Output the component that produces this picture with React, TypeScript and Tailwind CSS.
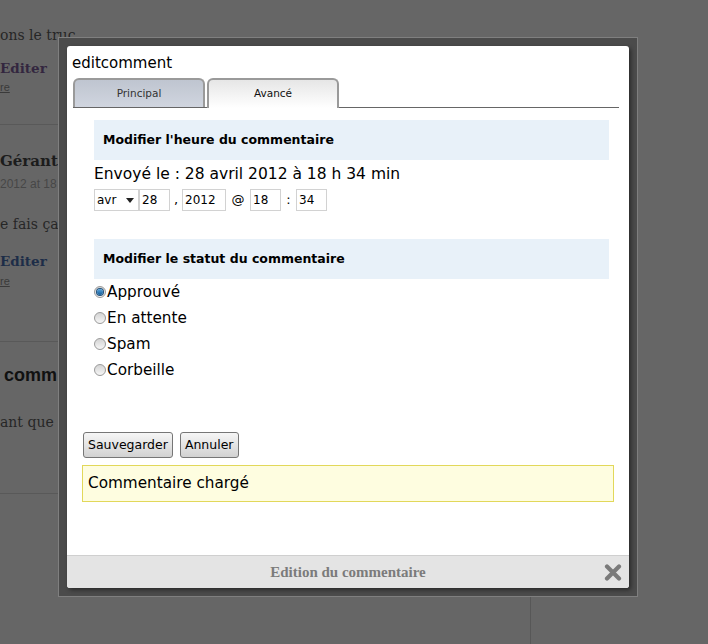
import React from "react";

const sans = "font-['DejaVu_Sans',sans-serif]";

function Radio({ label, checked }: { label: string; checked?: boolean }) {
  return (
    <label className="flex h-[26px] items-center">
      <span className="flex h-[12px] w-[12px] items-center justify-center rounded-full border border-[#9a9a9a] bg-gradient-to-b from-[#d4d4d4] to-[#f6f6f6]">
        {checked && (
          <span className="h-[6px] w-[6px] rounded-full bg-gradient-to-b from-[#5aa8e0] to-[#0f5a96] shadow-[0_0_0_1px_#1f4f7a]" />
        )}
      </span>
      <span className="ml-px text-[15.25px] leading-[20px] text-black">{label}</span>
    </label>
  );
}

function Field({ value, w }: { value: string; w: string }) {
  return (
    <input
      readOnly
      value={value}
      className={`h-[22px] ${w} border border-[#d2d2d2] bg-white px-[2px] text-[12px] text-black outline-none`}
    />
  );
}

function SectionTitle({ children }: { children: React.ReactNode }) {
  return (
    <div className="flex h-[40px] items-center bg-[#e8f1f9] pl-[9px] text-[12.5px] font-bold text-black">
      {children}
    </div>
  );
}

function BackgroundPage() {
  return (
    <div className="flex h-full">
      <div className="flex w-[530px] flex-col font-['DejaVu_Serif',serif]">
        <div className="flex h-[125px] flex-col border-b border-[#595959] pt-[26px]">
          <div className="h-[18px] text-[14px] leading-[18px] text-[#262626]">ons le truc</div>
          <div className="mt-[15px] flex h-[18px] items-center">
            <span className="text-[13.5px] font-bold text-[#33263f]">Editer</span>
            <span className="ml-[19px] text-[9px] text-[#2a2a2a]">▾</span>
          </div>
          <div className="mt-[3px] h-[14px] font-['Liberation_Sans',sans-serif] text-[11px] leading-[14px] text-[#3a3a3a] underline">re</div>
        </div>
        <div className="flex h-[217px] flex-col border-b border-[#595959] pt-[26px]">
          <div className="h-[20px] text-[15px] font-bold leading-[20px] text-[#1c1c1c]">Gérant</div>
          <div className="mt-[6px] h-[14px] font-['Liberation_Sans',sans-serif] text-[12px] leading-[14px] text-[#474747]">2012 at 18</div>
          <div className="mt-[24px] h-[18px] text-[14px] leading-[18px] text-[#262626]">e fais ça i</div>
          <div className="mt-[19px] flex h-[18px] items-center">
            <span className="text-[13.5px] font-bold text-[#1d2d48]">Editer</span>
            <span className="ml-[19px] text-[9px] text-[#2a2a2a]">▾</span>
          </div>
          <div className="mt-[4px] h-[14px] font-['Liberation_Sans',sans-serif] text-[11px] leading-[14px] text-[#3a3a3a] underline">re</div>
        </div>
        <div className="flex h-[152px] flex-col border-b border-[#595959] pt-[21px]">
          <div className="h-[24px] pl-[4px] font-['Liberation_Sans',sans-serif] text-[18px] font-bold leading-[24px] text-[#111]">comm</div>
          <div className="mt-[26px] h-[18px] text-[14px] leading-[18px] text-[#262626]">
            ant que <span className="text-[#2f2140] underline">M</span>
          </div>
        </div>
      </div>
      <div className="mt-[590px] flex-1 border-l border-[#575757]" />
    </div>
  );
}

export default function App() {
  return (
    <div className="relative h-[644px] w-[708px] overflow-hidden bg-[#666666]">
      <BackgroundPage />

      <div className="absolute left-[58px] top-[37px] h-[560px] w-[580px] border border-[#7f7f7f] bg-[#4b4b4b] p-2">
        <div className={`flex h-full flex-col rounded-[3px] bg-white shadow-[2px_2px_4px_rgba(0,0,0,0.45)] ${sans}`}>
          <div className="pl-[5px] pt-[7px] text-[15px] leading-[20px] text-black">editcomment</div>

          <div className="ml-[6px] mr-[10px] mt-[5px] flex h-[30px] items-end gap-[2px] border-b border-[#666]">
            <div className="flex h-[29px] w-[132px] items-center justify-center rounded-t-[6px] border-2 border-b-0 border-[#9a9a9a] bg-gradient-to-b from-[#bfc5d0] to-[#d0d5df] text-[10.5px] text-[#333]">
              Principal
            </div>
            <div className="-mb-px flex h-[30px] w-[132px] items-center justify-center rounded-t-[6px] border-2 border-b-0 border-[#9a9a9a] bg-gradient-to-b from-[#e6e6e6] to-white pb-px text-[10.5px] text-[#111]">
              Avancé
            </div>
          </div>

          <div className="ml-[27px] mr-[20px] mt-[12px]">
            <SectionTitle>Modifier l'heure du commentaire</SectionTitle>
            <div className="mt-[4px] h-[20px] text-[15.5px] leading-[20px] text-black">
              Envoyé le : 28 avril 2012 à 18 h 34 min
            </div>
            <div className="mt-[5px] flex h-[22px] items-center text-[13px] text-black">
              <div className="flex h-[22px] w-[45px] items-center justify-between border border-[#d2d2d2] bg-white pl-[2px] pr-[4px] text-[12px]">
                <span>avr</span>
                <svg width="8" height="5" viewBox="0 0 8 5">
                  <path d="M0 0h8L4 5z" fill="#222" />
                </svg>
              </div>
              <Field value="28" w="w-[31px]" />
              <span className="w-[12px] text-center">,</span>
              <Field value="2012" w="w-[44px]" />
              <span className="w-[24px] text-center">@</span>
              <Field value="18" w="w-[31px]" />
              <span className="w-[15px] text-center">:</span>
              <Field value="34" w="w-[31px]" />
            </div>

            <div className="mt-[28px]">
              <SectionTitle>Modifier le statut du commentaire</SectionTitle>
            </div>
            <div className="flex flex-col">
              <Radio label="Approuvé" checked />
              <Radio label="En attente" />
              <Radio label="Spam" />
              <Radio label="Corbeille" />
            </div>
          </div>

          <div className="ml-[16px] mt-[49px] flex gap-[7px]">
            <button className="h-[26px] rounded-[3px] border border-[#767676] bg-gradient-to-b from-[#f6f6f6] to-[#d2d2d2] px-[4px] text-[12.5px] text-black">
              Sauvegarder
            </button>
            <button className="h-[26px] rounded-[3px] border border-[#767676] bg-gradient-to-b from-[#f6f6f6] to-[#d2d2d2] px-[4px] text-[12.5px] text-black">
              Annuler
            </button>
          </div>

          <div className="mx-[15px] mt-[7px] flex h-[37px] items-center border border-[#e2d85a] bg-[#fefde0] pl-[5px] text-[15.25px] text-black">
            Commentaire chargé
          </div>

          <div className="relative mt-auto flex h-[33px] items-center justify-center rounded-b-[3px] border-t border-[#cfcfcf] bg-[#e4e4e4]">
            <span className="font-['Liberation_Serif',serif] text-[15px] font-bold text-[#7b7b7b]">
              Edition du commentaire
            </span>
            <svg
              className="absolute right-[7px] top-[8px]"
              width="18"
              height="17"
              viewBox="0 0 18 17"
            >
              <path d="M3 2.5l12 12M15 2.5l-12 12" stroke="#7a7a7a" strokeWidth="4.2" strokeLinecap="round" />
            </svg>
          </div>
        </div>
      </div>
    </div>
  );
}
